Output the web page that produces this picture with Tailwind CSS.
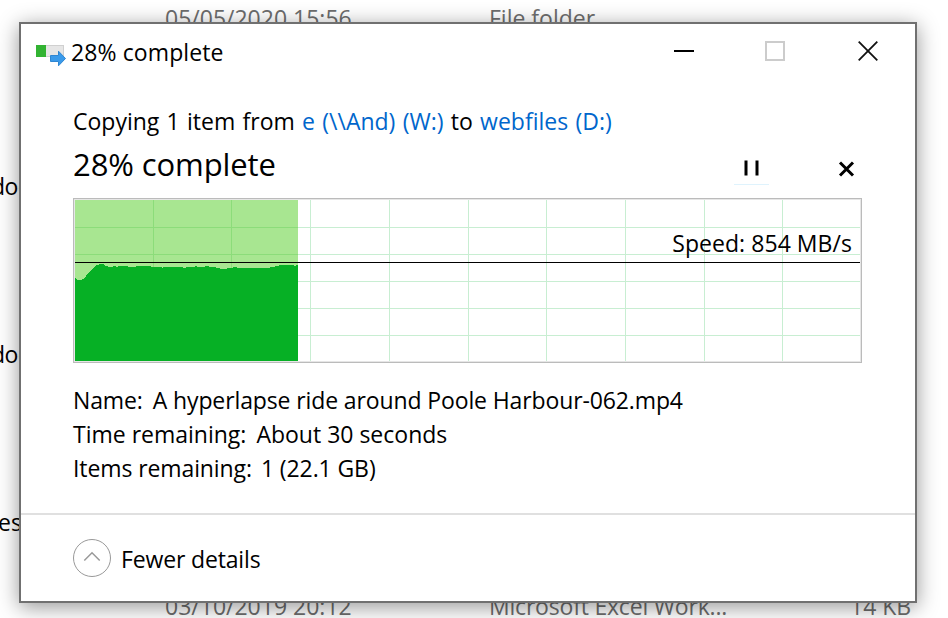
<!DOCTYPE html>
<html lang="en">
<head>
    <meta charset="UTF-8">
    <meta name="viewport" content="width=device-width, initial-scale=1.0">
    <title>28% complete</title>
    <script src="https://cdn.jsdelivr.net/npm/@tailwindcss/browser@4"></script>
</head>
<body class="relative w-[948px] h-[618px] overflow-hidden bg-white font-['Open_Sans','Noto_Sans',sans-serif] text-[23px] leading-[34px] text-black whitespace-nowrap">
    <!-- File list behind the dialog -->
    <div class="flex flex-col pt-px">
        <div class="flex h-[84px] text-[#6d6d6d]">
            <span class="w-[324px] ml-[165px]">05/05/2020 15:56</span>
            <span>File folder</span>
        </div>
        <div class="h-[84px]"></div>
        <div class="h-[84px]"><span class="-ml-[9px] tracking-[-0.5px]">doc</span></div>
        <div class="h-[84px]"></div>
        <div class="h-[84px]"><span class="-ml-[9px] tracking-[-0.5px]">doc</span></div>
        <div class="h-[84px]"></div>
        <div class="h-[84px]"><span class="-ml-[2px]">es</span></div>
        <div class="flex h-[30px] text-[#6d6d6d]">
            <span class="w-[324px] ml-[165px]">03/10/2019 20:12</span>
            <span class="w-[361px] tracking-[-0.2px]">Microsoft Excel Work...</span>
            <span>14 KB</span>
        </div>
    </div>

    <!-- Copy dialog -->
    <div class="absolute left-[19px] top-[22px] w-[898px] h-[581px] flex flex-col bg-white border-2 border-[#707070] shadow-[0_4px_20px_rgba(0,0,0,0.42)]">
        <!-- Title bar -->
        <div class="flex items-start h-[80px] pl-[15px]">
            <svg class="mt-[20px]" width="31" height="24" viewBox="0 0 31 24">
                <rect x="0.5" y="1.5" width="27" height="11" fill="#e6e6e6" stroke="#d0d0d0"/>
                <rect x="0" y="1" width="10" height="12" fill="#32b332"/>
                <path d="M14.500 11.500h8v-4.300l7 7.300-7 7.300v-4.300h-8z" fill="#3a9aea" stroke="#2f86d2"/>
            </svg>
            <span class="mt-[11px] ml-[4px] tracking-[0.1px]">28% complete</span>
            <div class="flex ml-auto pr-[37px] pt-[17px]">
                <svg width="20" height="20"><path d="M0 10h20" stroke="#000" stroke-width="2"/></svg>
                <svg class="ml-[71px]" width="20" height="20"><rect x="1" y="1" width="18" height="18" fill="none" stroke="#ccc" stroke-width="2"/></svg>
                <svg class="ml-[73px]" width="20" height="20"><path d="M0.700 0.700l18.600 18.600M19.300 0.700L0.700 19.300" stroke="#111" stroke-width="1.800"/></svg>
            </div>
        </div>

        <!-- Transfer details -->
        <div class="flex flex-col h-[409px] px-[52px]">
            <div class="h-[35px] [word-spacing:1.3px]">Copying 1 item from <span class="text-[#0066cc]">e (\\And) (W:)</span> to <span class="text-[#0066cc]">webfiles (D:)</span></div>
            <div class="flex h-[59px]">
                <span class="text-[31px] leading-[50px] tracking-[-0.1px]">28% complete</span>
                <div class="flex ml-auto mt-[7px] h-[39px]">
                    <div class="flex justify-center w-[35px] border-b border-[#dff3fd] pt-[14px]">
                        <svg width="15" height="16"><path d="M2 0.500v15M13 0.500v15" stroke="#000" stroke-width="3"/></svg>
                    </div>
                    <svg class="ml-[69px] mr-[8px] mt-[15px]" width="17" height="16"><path d="M2 1.500l13 13M15 1.500l-13 13" stroke="#000" stroke-width="3"/></svg>
                </div>
            </div>

            <!-- Speed graph -->
            <div class="relative w-[789px] h-[165px] border border-[#bbb]">
                <svg class="border border-[#e6e6e6]" width="787" height="163" viewBox="0 0 785 161" shape-rendering="crispEdges">
                    <path d="M78.500 0v161M156.500 0v161M235.500 0v161M314.500 0v161M393.500 0v161M471.500 0v161M550.500 0v161M629.500 0v161M707.500 0v161M0 27.500h785M0 54.500h785M0 81.500h785M0 108.500h785M0 135.500h785" stroke="#c8eed2"/>
                    <rect width="223" height="161" fill="#a8e691"/>
                    <path d="M78.500 0v161M156.500 0v161M0 27.500h223M0 54.500h223" stroke="#8cdc7a"/>
                    <path d="M0 78h1v1h1v1h5v-1h2l2-3 3-4 3-2 4-5h3v-1h5v1h1v1h3v1h5v-1h3v1h2v-1h10v1h8v-1h15v1h11v1h1v-1h20v1h3v-1h9v-1h2v1h8v-1h4v1h7v1h4v1h7v-1h6v-1h4v1h33v-1h5v-1h4v-1h15v1h2v-1h2V161H0z" fill="#06b025"/>
                    <path d="M0 62.500h785" stroke="#000"/>
                </svg>
                <span class="absolute right-[9px] top-[27px] tracking-[0.05px]">Speed: 854 MB/s</span>
            </div>

            <div class="flex flex-col mt-[20px]">
                <div class="flex gap-[10px] tracking-[-0.12px]"><span>Name:</span><span>A hyperlapse ride around Poole Harbour-062.mp4</span></div>
                <div class="flex gap-[10px]"><span>Time remaining:</span><span>About 30 seconds</span></div>
                <div class="flex gap-[9px] tracking-[-0.1px]"><span>Items remaining:</span><span>1 (22.1 GB)</span></div>
            </div>
        </div>

        <!-- Footer -->
        <div class="flex items-start flex-1 border-t-2 border-[#e0e0e0] pl-[52px]">
            <svg class="mt-[24px]" width="38" height="38" viewBox="0 0 38 38" fill="none" stroke="#999">
                <circle cx="19" cy="19" r="18.500"/>
                <path d="M11.300 21.500l7.700-7.700 7.700 7.700" stroke-width="1.500"/>
            </svg>
            <span class="mt-[27px] ml-[10px] tracking-[-0.15px]">Fewer details</span>
        </div>
    </div>
</body>
</html>
